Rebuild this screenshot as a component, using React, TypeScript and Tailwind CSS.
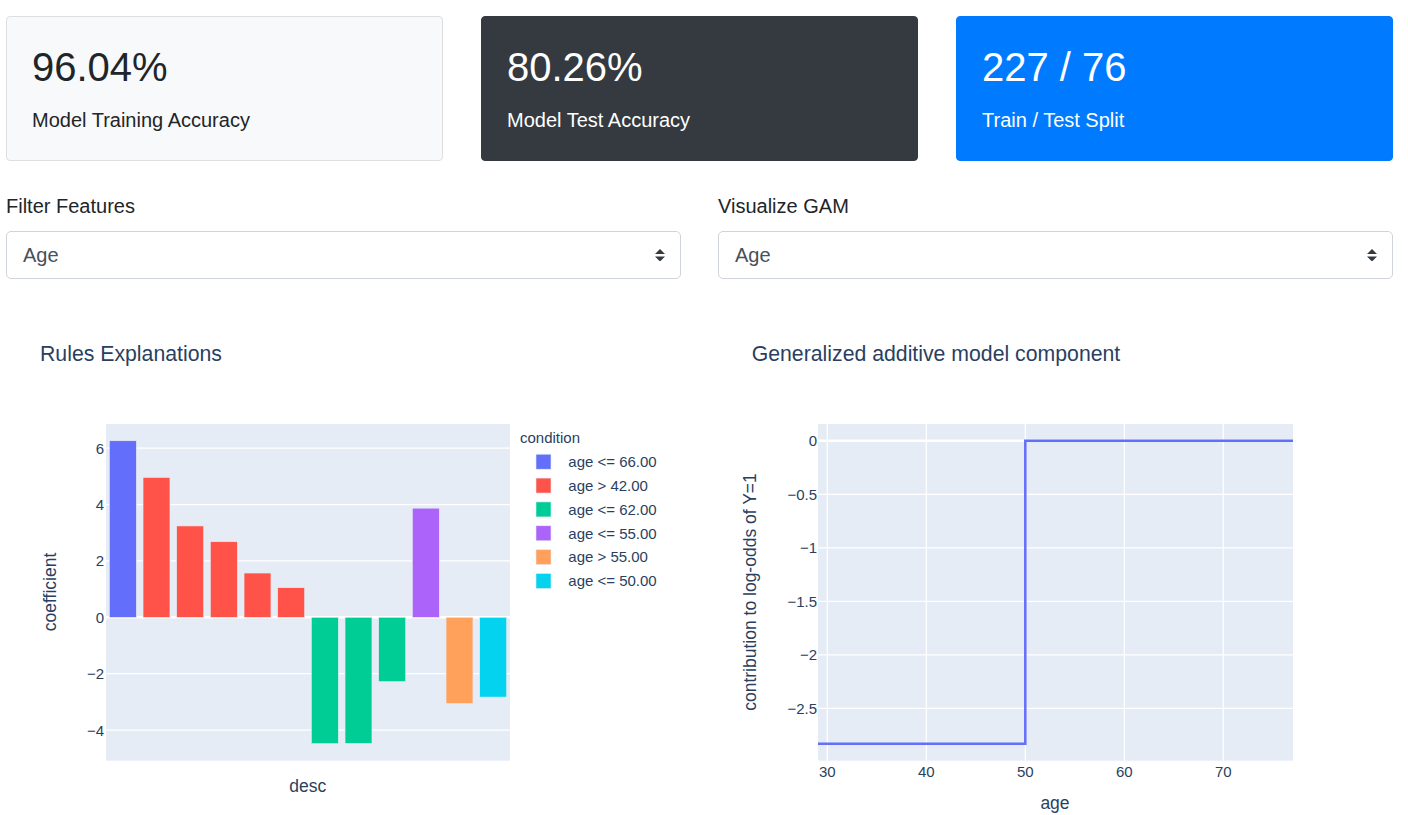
import React from 'react';

const TEXT = '#2a3f5f';
const PLOT_BG = '#e5ecf6';
const RED = '#ff5249';
const CYAN = '#04d3ef';

const cards = [
  { value: '96.04%', label: 'Model Training Accuracy', cls: 'bg-[#f8f9fa] border-[#dfdfdf] text-[#212529]' },
  { value: '80.26%', label: 'Model Test Accuracy', cls: 'bg-[#343a40] border-[#343a40] text-white' },
  { value: '227 / 76', label: 'Train / Test Split', cls: 'bg-[#007bff] border-[#007bff] text-white' },
];

function SelectBox({ label }: { label: string }) {
  return (
    <div className="w-[675px]">
      <div className="h-[30px] mb-[10px] text-[20px] leading-[30px] text-[#212529]">{label}</div>
      <div className="h-[48px] flex items-center justify-between rounded-[5px] border border-[#ced4da] bg-white pl-[16px] pr-[15px]">
        <span className="text-[20px] text-[#495057]">Age</span>
        <svg width="10" height="12.5" viewBox="0 0 4 5">
          <path d="M2 0L0 2h4zm0 5L0 3h4z" fill="#343a40" />
        </svg>
      </div>
    </div>
  );
}

// rules explanations bars
const bars = [
  { v: 6.26, c: '#636efa' },
  { v: 4.96, c: RED },
  { v: 3.24, c: RED },
  { v: 2.68, c: RED },
  { v: 1.57, c: RED },
  { v: 1.05, c: RED },
  { v: -4.48, c: '#00cc96' },
  { v: -4.47, c: '#00cc96' },
  { v: -2.28, c: '#00cc96' },
  { v: 3.87, c: '#ab63fa' },
  { v: -3.06, c: '#ffa15a' },
  { v: -2.83, c: CYAN },
];

const legend = [
  { label: 'age <= 66.00', c: '#636efa' },
  { label: 'age > 42.00', c: RED },
  { label: 'age <= 62.00', c: '#00cc96' },
  { label: 'age <= 55.00', c: '#ab63fa' },
  { label: 'age > 55.00', c: '#ffa15a' },
  { label: 'age <= 50.00', c: CYAN },
];

function RulesChart() {
  const left = 100;
  const top = 124;
  const w = 404;
  const h = 336.7;
  const zeroY = 317.3;
  const unit = 28.2;
  const step = w / bars.length;
  const bw = step * 0.8;
  const ticks = [6, 4, 2, -2, -4];

  return (
    <svg width="675" height="515" className="block" fontFamily="'Liberation Sans', Arial, sans-serif">
      <text x="34" y="61" fontSize="21.25" fill={TEXT}>Rules Explanations</text>
      <rect x={left} y={top} width={w} height={h} fill={PLOT_BG} />
      {ticks.map((t) => (
        <line key={t} x1={left} x2={left + w} y1={zeroY - t * unit} y2={zeroY - t * unit} stroke="#fff" strokeWidth="1.25" />
      ))}
      <line x1={left} x2={left + w} y1={zeroY} y2={zeroY} stroke="#fff" strokeWidth="2.5" />
      {bars.map((b, i) => {
        const y = b.v > 0 ? zeroY - b.v * unit : zeroY;
        return (
          <rect
            key={i}
            x={left + i * step + (step - bw) / 2}
            y={y}
            width={bw}
            height={Math.abs(b.v) * unit}
            fill={b.c}
            stroke={PLOT_BG}
            strokeWidth="0.6"
          />
        );
      })}
      {[6, 4, 2, 0, -2, -4].map((t) => (
        <text key={t} x="98" y={zeroY - t * unit + 5.4} fontSize="15" fill={TEXT} textAnchor="end">
          {t < 0 ? `\u2212${-t}` : t}
        </text>
      ))}
      <text transform="translate(43.5 292) rotate(-90)" dy="6" fontSize="17.5" fill={TEXT} textAnchor="middle">
        coefficient
      </text>
      <text x="301.7" y="492" fontSize="17.5" fill={TEXT} textAnchor="middle">desc</text>

      {/* legend */}
      <text x="514" y="142.7" fontSize="15" fill={TEXT}>condition</text>
      {legend.map((l, i) => {
        const cy = 161.7 + i * 23.86;
        return (
          <g key={l.label}>
            <rect x="530" y={cy - 7.5} width="15" height="15" fill={l.c} stroke={PLOT_BG} strokeWidth="0.6" />
            <text x="562.3" y={cy + 5.3} fontSize="15" fill={TEXT}>{l.label}</text>
          </g>
        );
      })}
    </svg>
  );
}

function GamChart() {
  const left = 100;
  const top = 124;
  const w = 475;
  const h = 336.7;
  const zeroY = 140.7;
  const unit = 107.1;
  const x30 = 109.3;
  const xu = 9.9;
  const yTicks = [0, -0.5, -1, -1.5, -2, -2.5];
  const xTicks = [30, 40, 50, 60, 70];
  const xs = (a: number) => x30 + (a - 30) * xu;
  const low = zeroY + 2.83 * unit;

  return (
    <svg width="675" height="515" className="block" fontFamily="'Liberation Sans', Arial, sans-serif">
      <text x="33.7" y="61" fontSize="21.25" fill={TEXT}>Generalized additive model component</text>
      <rect x={left} y={top} width={w} height={h} fill={PLOT_BG} />
      {yTicks.slice(1).map((t) => (
        <line key={t} x1={left} x2={left + w} y1={zeroY - t * unit} y2={zeroY - t * unit} stroke="#fff" strokeWidth="1.25" />
      ))}
      {xTicks.map((t) => (
        <line key={t} x1={xs(t)} x2={xs(t)} y1={top} y2={top + h} stroke="#fff" strokeWidth="1.25" />
      ))}
      <line x1={left} x2={left + w} y1={zeroY} y2={zeroY} stroke="#fff" strokeWidth="2.5" />
      <polyline
        points={`${left},${low} ${xs(50)},${low} ${xs(50)},${zeroY} ${left + w},${zeroY}`}
        fill="none"
        stroke="#636efa"
        strokeWidth="2.5"
      />
      {yTicks.map((t) => (
        <text key={t} x="99" y={zeroY - t * unit + 5.4} fontSize="15" fill={TEXT} textAnchor="end">
          {t < 0 ? `\u2212${-t}` : t}
        </text>
      ))}
      {xTicks.map((t) => (
        <text key={t} x={xs(t)} y="477.3" fontSize="15" fill={TEXT} textAnchor="middle">{t}</text>
      ))}
      <text transform="translate(31.5 292) rotate(-90)" dy="6" fontSize="17.5" fill={TEXT} textAnchor="middle">
        contribution to log-odds of Y=1
      </text>
      <text x="337" y="508.5" fontSize="17.5" fill={TEXT} textAnchor="middle">age</text>
    </svg>
  );
}

export default function App() {
  return (
    <div className="w-[1408px] min-h-[815px] bg-white font-['Liberation_Sans',Arial,sans-serif]">
      <div className="ml-[6px] w-[1387px] pt-[16px]">
        <div className="flex gap-[38px]">
          {cards.map((c) => (
            <div key={c.label} className={`w-[437px] h-[145px] rounded-[4px] border px-[25px] pt-[26px] ${c.cls}`}>
              <div className="text-[40px] leading-[48px]">{c.value}</div>
              <div className="mt-[17px] text-[20px] leading-[24px]">{c.label}</div>
            </div>
          ))}
        </div>

        <div className="mt-[30px] flex gap-[37px]">
          <SelectBox label="Filter Features" />
          <SelectBox label="Visualize GAM" />
        </div>

        <div className="mt-[21px] flex gap-[37px]">
          <RulesChart />
          <GamChart />
        </div>
      </div>
    </div>
  );
}
